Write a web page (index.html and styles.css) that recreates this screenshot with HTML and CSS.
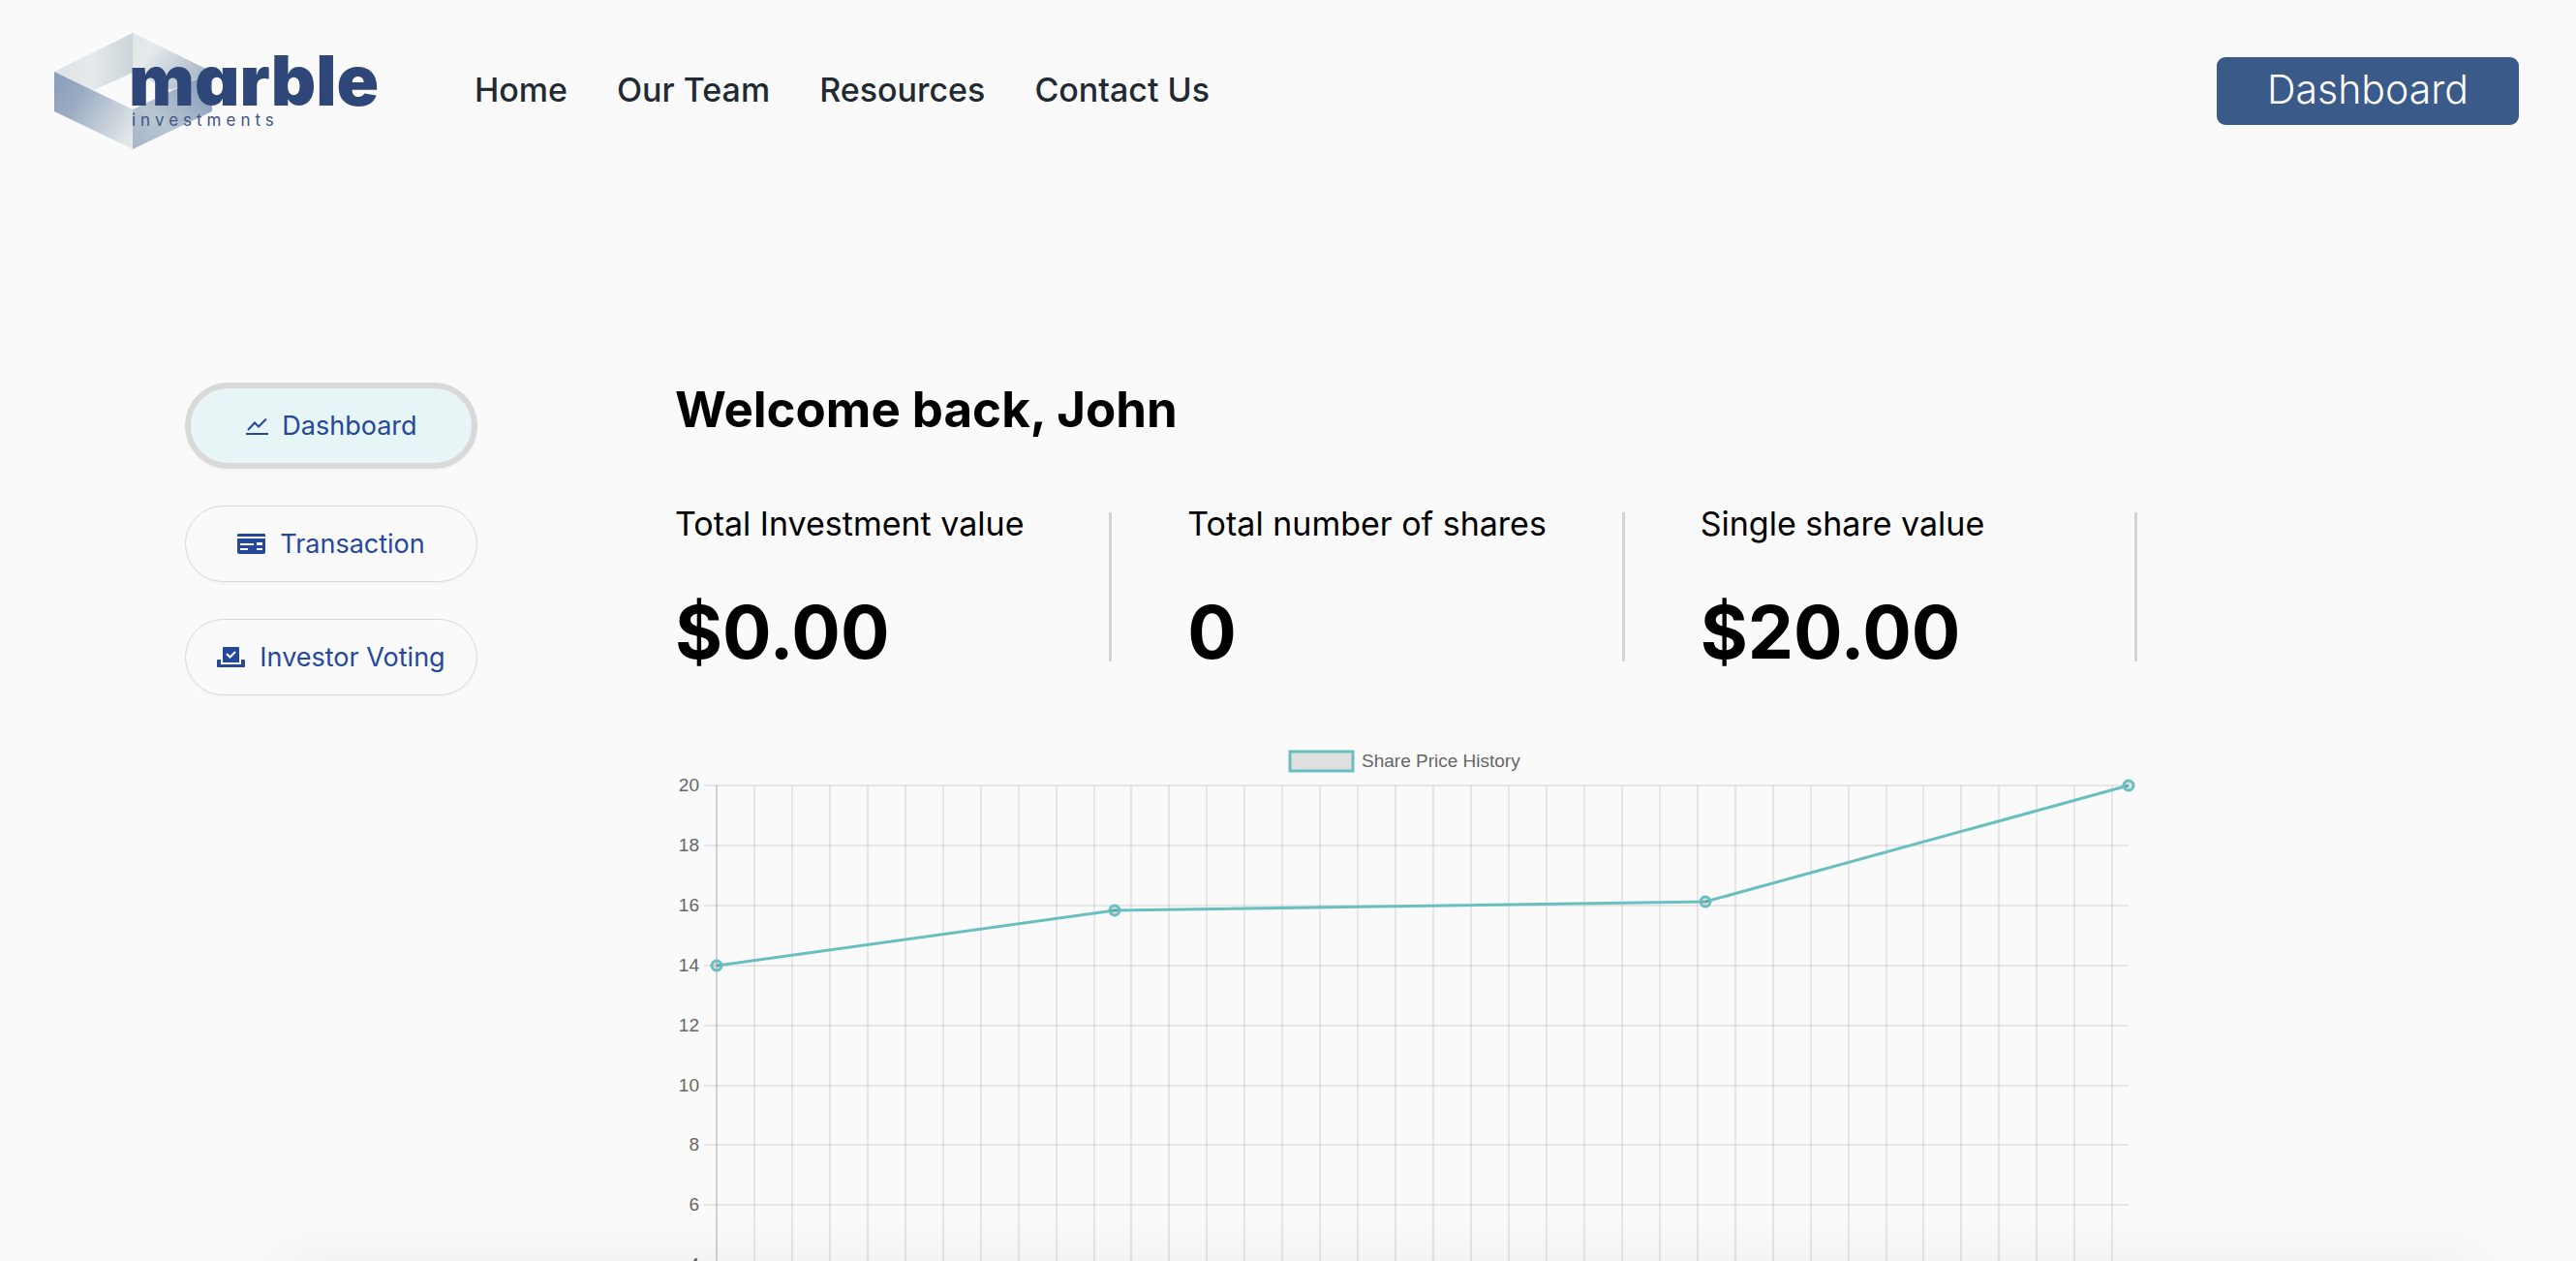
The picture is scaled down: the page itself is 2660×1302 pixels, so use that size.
FILE: index.html
```
<!DOCTYPE html>
<html lang="en">
<head>
  <meta charset="utf-8">
  <meta name="viewport" content="width=device-width, initial-scale=1">
  <title>Marble Investments</title>
  <link rel="stylesheet" href="styles.css">
</head>
<body>
  <div class="page">
    <header class="header">
      <a class="logo" href="#" aria-label="Marble Investments">
        <svg class="logo-art" width="342" height="122" viewBox="0 0 342 122">
          <defs>
            <linearGradient id="face-a" x1="0" y1="0" x2="1" y2="0"><stop offset="0" stop-color="#dce1e4"/><stop offset=".45" stop-color="#e6eaeb"/><stop offset="1" stop-color="#cbd4da"/></linearGradient>
            <linearGradient id="face-b" x1="0" y1="0" x2="1" y2=".5"><stop offset="0" stop-color="#dfe4e6"/><stop offset=".3" stop-color="#e6eaeb"/><stop offset="1" stop-color="#a9b9c8"/></linearGradient>
            <linearGradient id="face-c" x1="0" y1=".2" x2="1" y2=".8"><stop offset="0" stop-color="#8ba0bc"/><stop offset=".3" stop-color="#9badc4"/><stop offset="1" stop-color="#e3e8e9"/></linearGradient>
            <linearGradient id="face-d" x1="0" y1="1" x2="1" y2="0"><stop offset="0" stop-color="#a3b4c8"/><stop offset=".35" stop-color="#b9c6d2"/><stop offset="1" stop-color="#7e96b6"/></linearGradient>
          </defs>
          <path fill="url(#face-a)" d="M82 0 1 40 42 59 82 41z"/>
          <path fill="url(#face-b)" d="M82 0V41L122 59 164 40z"/>
          <path fill="url(#face-c)" d="M1 40 82 79V120L1 81z"/>
          <path fill="url(#face-d)" d="M164 40 82 79V120L164 81z"/>
          <text class="logo-name" x="78" y="75">marble</text>
          <text class="logo-sub" x="81" y="96">investments</text>
        </svg>
      </a>
      <nav class="nav" aria-label="Main">
        <a href="#">Home</a>
        <a href="#">Our Team</a>
        <a href="#">Resources</a>
        <a href="#">Contact Us</a>
      </nav>
      <button class="cta" type="button">Dashboard</button>
    </header>

    <div class="layout">
      <aside class="sidebar">
        <button class="pill pill-active" type="button">
          <svg class="icon" width="24" height="24" viewBox="0 0 24 24" fill="none" stroke="currentColor" stroke-width="2"><path d="M3 16 10 8.500 14 12.500 22 4.500M1 20H24"/></svg>
          Dashboard
        </button>
        <button class="pill" type="button">
          <svg class="icon" width="30" height="24" viewBox="0 0 30 24"><path fill="currentColor" fill-rule="evenodd" d="M2 1H28Q29 1 29 2V4H0V2Q0 1 2 1zM0 6H29V20Q29 22 27 22H2Q0 22 0 20zM3 11V13H17V11zM3 16V18H11V16zM20 10V13H26V10zM20 16V18H26V16z"/></svg>
          Transaction
        </button>
        <button class="pill" type="button">
          <svg class="icon" width="30" height="24" viewBox="0 0 30 24"><path fill="currentColor" d="M7 1H22Q23 1 23 2V17H6V2Q6 1 7 1zM1 14H4V19H25V14H28Q29 14 29 15V21Q29 22 28 22H1Q0 22 0 21V15Q0 14 1 14z"/><path fill="none" stroke="#fafafa" stroke-width="2" d="M10 8 13.500 11.500 19 6"/></svg>
          Investor Voting
        </button>
      </aside>

      <main class="content">
        <h1 class="welcome">Welcome back, John</h1>
        <section class="stats">
          <div class="stat"><h2>Total Investment value</h2><p>$0.00</p></div>
          <div class="stat"><h2>Total number of shares</h2><p>0</p></div>
          <div class="stat"><h2>Single share value</h2><p>$20.00</p></div>
        </section>
        <svg class="chart" id="chart" viewBox="0 0 1510 700" role="img" aria-label="Share Price History"></svg>
      </main>
    </div>
  </div>
  <script src="chart.js"></script>
</body>
</html>
```
FILE: styles.css
```
* {
  box-sizing: border-box;
}

body {
  margin: 0;
  background: #fafafa;
  color: #000;
  font-family: Inter, "Open Sans", sans-serif;
}

.page {
  position: relative;
  height: 100vh;
  overflow: hidden;
}

/* Soft shadow cast by the panel under the fold */
.page::after {
  content: "";
  position: absolute;
  top: 100%;
  left: 280px;
  right: 90px;
  height: 200px;
  border-radius: 40px;
  box-shadow: 0 0 64px rgba(0, 0, 0, 0.06);
  pointer-events: none;
}

.header {
  display: flex;
  align-items: center;
  padding: 34px 59px 0 55px;
}

.logo-art {
  display: block;
}

.logo-name {
  fill: #2e4678;
  font-size: 72px;
  font-weight: 900;
  font-feature-settings: "cv11";
}

.logo-sub {
  fill: #3d5482;
  font-size: 17px;
  letter-spacing: 5px;
}

.nav {
  display: flex;
  gap: 51px;
  margin-left: 93px;
  padding-bottom: 4px;
}

.nav a {
  color: #212932;
  font-size: 34px;
  font-weight: 500;
  line-height: 40px;
  text-decoration: none;
}

.cta {
  margin: 0 0 2px auto;
  padding: 8px 52px 12px;
  border: 0;
  border-radius: 9px;
  background: #3a5a89;
  color: #fff;
  font: 300 41px/50px Inter, sans-serif;
}

.layout {
  display: grid;
  grid-template-columns: 302px minmax(0, 1fr);
  gap: 204px;
  padding: 239px 453px 0 191px;
}

.sidebar {
  display: flex;
  flex-direction: column;
  gap: 38px;
}

.pill {
  display: flex;
  align-items: center;
  justify-content: center;
  gap: 14px;
  width: 100%;
  height: 79px;
  border: 1px solid #d9d9d9;
  border-radius: 40px;
  background: #fafafa;
  box-shadow: 0 3px 1px rgba(0, 0, 0, 0.02);
  color: #24489a;
  font: 400 27px/36px Inter, sans-serif;
  white-space: nowrap;
}

.pill-active {
  height: 89px;
  border-width: 6px;
  border-radius: 45px;
  background: #e8f5f7;
}

.icon {
  flex: none;
}

.welcome {
  margin: 0;
  font-size: 51px;
  font-weight: 700;
  line-height: 56px;
}

.stats {
  display: grid;
  grid-template-columns: repeat(3, 1fr);
  gap: 78px;
  margin-top: 78px;
}

.stat {
  height: 154px;
  border-right: 3px solid #d1d5db;
}

.stat h2 {
  margin: 0;
  font-size: 34px;
  font-weight: 400;
  line-height: 24px;
  white-space: nowrap;
}

.stat p {
  margin: 56px 0 0;
  font-size: 75px;
  font-weight: 700;
  line-height: 88px;
}

.chart {
  display: block;
  width: 100%;
  height: auto;
  margin-top: 82px;
}

.chart text {
  fill: #666;
  font-family: "Liberation Sans", Arial, sans-serif;
  font-size: 19px;
}

.tick-label {
  text-anchor: end;
}

.grid-line {
  stroke: rgba(0, 0, 0, 0.08);
  stroke-width: 2;
}

.axis-line {
  stroke: rgba(0, 0, 0, 0.16);
  stroke-width: 2;
}

.series {
  fill: none;
  stroke: #69bfc0;
  stroke-width: 3;
}

.point {
  fill: rgba(0, 0, 0, 0.1);
  stroke: #69bfc0;
  stroke-width: 3;
}

.legend-box {
  fill: #dfdfdf;
  stroke: #69bfc0;
  stroke-width: 3;
}
```
FILE: chart.js
```
const chart = document.getElementById("chart");
const plot = { left: 43, right: 1501, top: 46, bottom: 665 };
const maxValue = 20;
const days = 37.43;

// Price on each day that the share was revalued
const prices = [
  { day: 0, value: 14 },
  { day: 10.55, value: 15.82 },
  { day: 26.2, value: 16.13 },
  { day: days, value: 20 },
];

function add(name, attributes, text) {
  const node = document.createElementNS("http://www.w3.org/2000/svg", name);
  for (const key in attributes) node.setAttribute(key, attributes[key]);
  if (text) node.textContent = text;
  chart.appendChild(node);
}

const toX = (day) => Math.round(plot.left + (day / days) * (plot.right - plot.left));
const toY = (value) => Math.round(plot.bottom - (value / maxValue) * (plot.bottom - plot.top));

for (let day = 0; day < days; day += 1) {
  const x = toX(day);
  add("line", { class: day ? "grid-line" : "axis-line", x1: x, x2: x, y1: plot.top, y2: plot.bottom });
}
for (let value = 4; value <= maxValue; value += 2) {
  const y = toY(value);
  add("line", { class: "grid-line", x1: plot.left - 13, x2: plot.right, y1: y, y2: y });
  add("text", { class: "tick-label", x: 25, y: y + 6 }, String(value));
}

add("polyline", { class: "series", points: prices.map((p) => toX(p.day) + "," + toY(p.value)).join(" ") });
prices.forEach((p) => add("circle", { class: "point", cx: toX(p.day), cy: toY(p.value), r: 5 }));

add("rect", { class: "legend-box", x: 635, y: 11, width: 65, height: 20 });
add("text", { x: 709, y: 27 }, "Share Price History");
```
